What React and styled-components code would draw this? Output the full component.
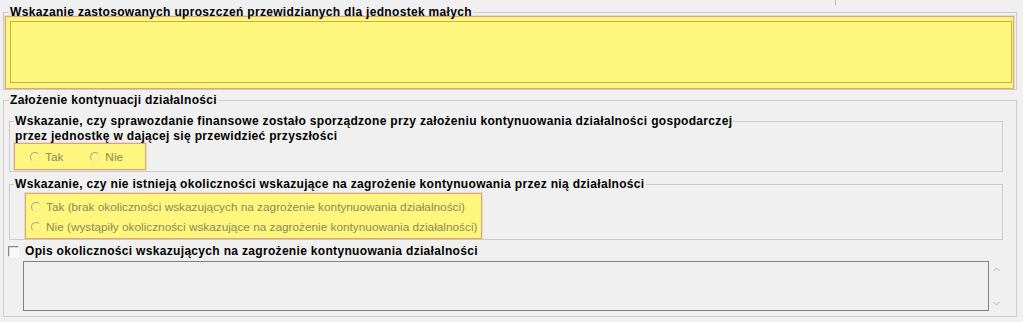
import React from "react";
import styled, { createGlobalStyle } from "styled-components";

const GlobalStyle = createGlobalStyle`
  html, body {
    margin: 0;
    padding: 0;
    background: #f0f0f0;
  }
  body {
    font-family: "Liberation Sans", Arial, sans-serif;
    font-size: 12px;
    color: #000;
  }
`;

const Page = styled.div`
  width: 1023px;
  height: 322px;
  box-sizing: border-box;
  overflow: hidden;
  padding-left: 3px;
`;

const TopStrip = styled.div`
  height: 5px;
  display: flex;
`;

const Tick = styled.div`
  width: 1px;
  height: 5px;
  margin-left: 832px;
  background: #b4b4b4;
`;

const Group = styled.fieldset`
  box-sizing: border-box;
  width: ${(p) => p.$w}px;
  min-inline-size: 0;
  margin: ${(p) => p.$mt || 0}px 0 0 0;
  padding: 0 ${(p) => p.$pr || 0}px ${(p) => p.$pb || 0}px ${(p) => p.$pl || 0}px;
  border: 1px solid #cbcbcb;
`;

const Legend = styled.legend`
  margin-left: ${(p) => p.$ml || 0}px;
  padding: 0 1px;
  font-weight: bold;
  font-size: 12px;
  line-height: 14px;
  letter-spacing: 0.32px;
  white-space: nowrap;
`;

const BoldLine = styled.div`
  font-weight: bold;
  line-height: 14px;
  letter-spacing: 0.32px;
  margin-top: 1px;
  white-space: nowrap;
`;

const Highlight = styled.div`
  box-sizing: border-box;
  margin: ${(p) => p.$m || "0"};
  border: 1px solid #dea37c;
  box-shadow: 0 0 0 1px rgba(236, 190, 150, 0.45);
  background: #fff67e;
`;

const MemoBox = styled(Highlight)`
  padding: 4px 1px 5px 4px;
`;

const YellowMemo = styled.div`
  height: 62px;
  box-sizing: border-box;
  border: 1px solid #bcb54c;
  background: #fff67e;
`;

const RadioRow = styled(Highlight)`
  display: flex;
  align-items: center;
  gap: 27px;
  width: 132px;
  height: 27px;
  padding-left: 15px;
`;

const RadioColumn = styled(Highlight)`
  display: flex;
  flex-direction: column;
  width: fit-content;
  height: 46px;
  padding: 3px 4px 0 5px;
`;

const RadioItem = styled.label`
  display: flex;
  align-items: center;
  gap: 5px;
  height: ${(p) => (p.$tall ? "20px" : "auto")};
  color: #8d8a5c;
  font-size: 11.8px;
  white-space: nowrap;
`;

const RadioDot = styled.span`
  flex-shrink: 0;
  width: 10px;
  height: 10px;
  box-sizing: border-box;
  border-radius: 50%;
  border: 1px solid;
  border-color: #a3a3a3 #ecec9c #ecec9c #a3a3a3;
`;

const CheckRow = styled.label`
  display: flex;
  align-items: center;
  gap: 6px;
  height: 14px;
  margin: 4px 0 0 -1px;
  font-weight: bold;
  letter-spacing: 0.32px;
  white-space: nowrap;
`;

const CheckBox = styled.span`
  flex-shrink: 0;
  width: 11px;
  height: 11px;
  box-sizing: border-box;
  border: 1px solid;
  border-color: #8a8a8a #ffffff #ffffff #8a8a8a;
  background: #f8f8f8;
  box-shadow: inset 1px 1px 0 #d8d8d8;
`;

const MemoRow = styled.div`
  display: flex;
  margin: 3px 0 0 14px;
`;

const GrayMemo = styled.div`
  width: 966px;
  height: 50px;
  box-sizing: border-box;
  border: 1px solid #828282;
  background: #f0f0f0;
`;

const ScrollArrows = styled.div`
  display: flex;
  flex-direction: column;
  justify-content: space-between;
  align-items: center;
  width: 14px;
  padding: 6px 0 5px;
`;

const Arrow = ({ down }) => (
  <svg width="7" height="5" viewBox="0 0 7 5">
    <polyline
      points={down ? "0.5,1 3.5,4 6.5,1" : "0.5,4 3.5,1 6.5,4"}
      fill="none"
      stroke="#b2b2b2"
      strokeWidth="1"
    />
  </svg>
);

const Radio = ({ children, tall }) => (
  <RadioItem $tall={tall}>
    <RadioDot />
    {children}
  </RadioItem>
);

export default function App() {
  return (
    <>
      <GlobalStyle />
      <Page>
        <TopStrip>
          <Tick />
        </TopStrip>

        <Group $w={1014} $pl={1} $pr={2}>
          <Legend $ml={4}>
            Wskazanie zastosowanych uproszczeń przewidzianych dla jednostek małych
          </Legend>
          <MemoBox $m="-3px 0 0 0">
            <YellowMemo />
          </MemoBox>
        </Group>

        <Group $w={1014} $mt={3} $pl={5} $pr={13} $pb={5}>
          <Legend>Założenie kontynuacji działalności</Legend>

          <Group $w={994} $mt={7} $pl={5} $pb={1}>
            <Legend $ml={-1}>
              Wskazanie, czy sprawozdanie finansowe zostało sporządzone przy
              założeniu kontynuowania działalności gospodarczej
            </Legend>
            <BoldLine>przez jednostkę w dającej się przewidzieć przyszłości</BoldLine>
            <RadioRow $m="0 0 0 -1px">
              <Radio>Tak</Radio>
              <Radio>Nie</Radio>
            </RadioRow>
          </Group>

          <Group $w={994} $mt={5} $pl={5}>
            <Legend $ml={-1}>
              Wskazanie, czy nie istnieją okoliczności wskazujące na zagrożenie
              kontynuowania przez nią działalności
            </Legend>
            <RadioColumn $m="2px 0 0 10px">
              <Radio tall>
                Tak (brak okoliczności wskazujących na zagrożenie kontynuowania
                działalności)
              </Radio>
              <Radio tall>
                Nie (wystąpiły okoliczności wskazujące na zagrożenie
                kontynuowania działalności)
              </Radio>
            </RadioColumn>
          </Group>

          <CheckRow>
            <CheckBox />
            Opis okoliczności wskazujących na zagrożenie kontynuowania
            działalności
          </CheckRow>

          <MemoRow>
            <GrayMemo />
            <ScrollArrows>
              <Arrow />
              <Arrow down />
            </ScrollArrows>
          </MemoRow>
        </Group>
      </Page>
    </>
  );
}
